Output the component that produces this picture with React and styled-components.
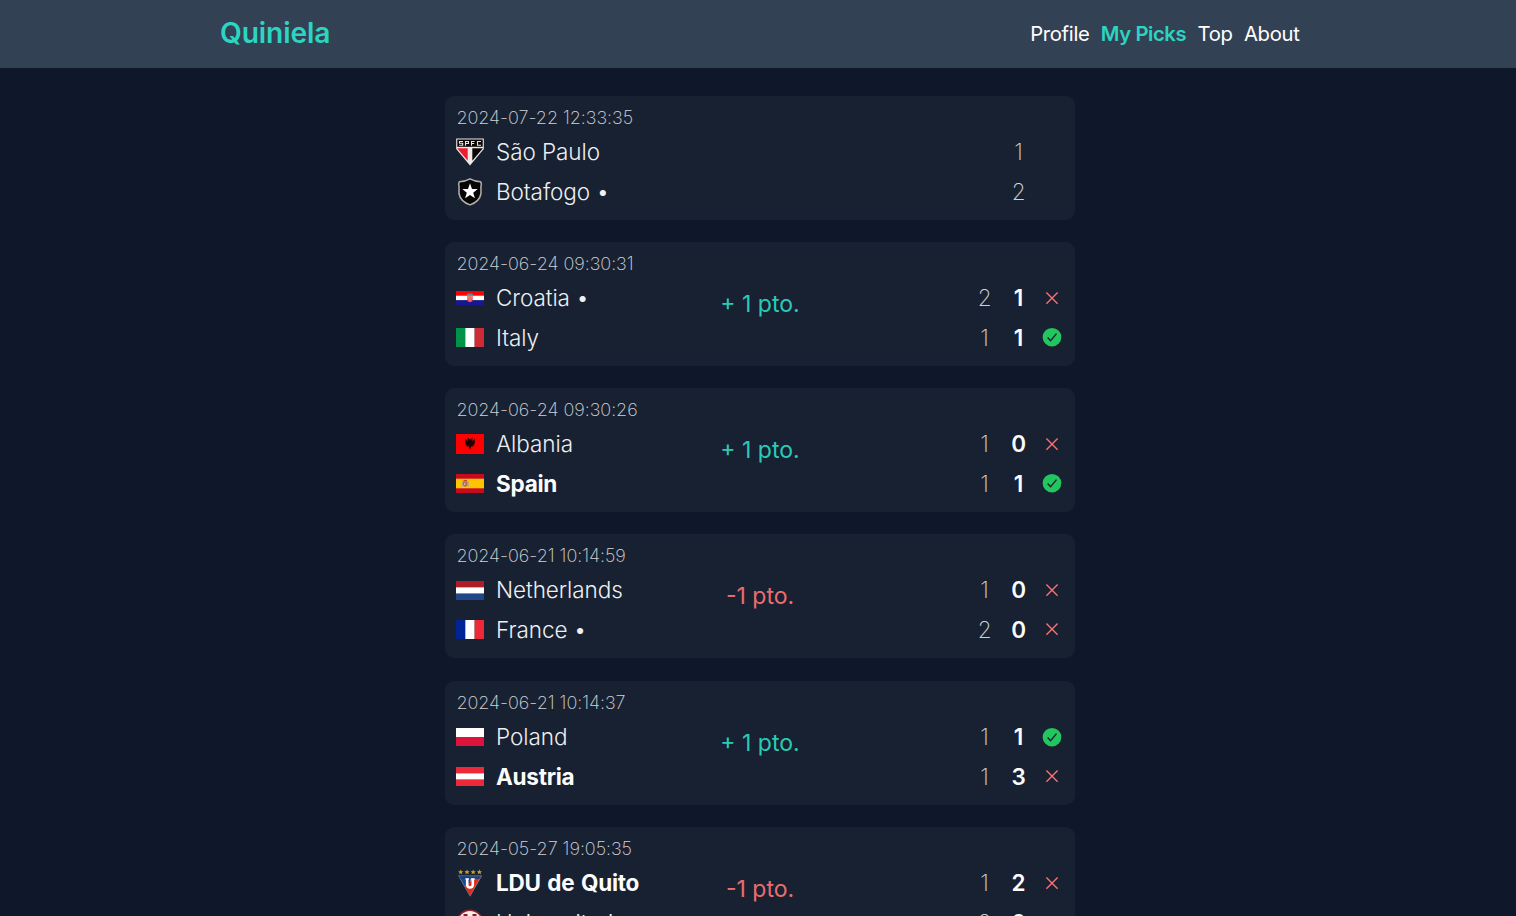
import React from "react";
import styled, { createGlobalStyle } from "styled-components";

const GlobalStyle = createGlobalStyle`
  * { box-sizing: border-box; }
  html, body { margin: 0; height: 100%; overflow: hidden; }
  body {
    background: #0f172a;
    color: #fff;
    font-family: Inter, "Liberation Sans", sans-serif;
  }
`;

const Page = styled.div`
  height: 916px;
  overflow: hidden;
`;

const Header = styled.header`
  height: 68px;
  padding-left: 4px;
  background: #334155;
`;

const HeaderInner = styled.div`
  width: 1080px;
  height: 100%;
  margin: 0 auto;
  padding-right: 0.5px;
  display: flex;
  align-items: center;
  justify-content: space-between;
`;

const Brand = styled.a`
  color: #2dd4bf;
  font-size: 28.2px;
  font-weight: 600;
  line-height: 36px;
  margin-bottom: 2px;
  letter-spacing: -0.12px;
`;

const Nav = styled.nav`
  display: flex;
  gap: 11.25px;
  font-size: 20.25px;
  line-height: 32px;
`;

const NavLink = styled.a`
  color: ${(p) => (p.$active ? "#2dd4bf" : "#fff")};
  font-weight: ${(p) => (p.$active ? 600 : 400)};
  letter-spacing: ${(p) => (p.$active ? "-0.4px" : "-0.3px")};
`;

const List = styled.main`
  padding: 28px 0 0 4px;
  display: flex;
  flex-direction: column;
  align-items: center;
  gap: 22px;
`;

const Card = styled.article`
  width: 630px;
  height: 124px;
  flex: none;
  padding: 9px 11px 0;
  border-radius: 9px;
  background: #172132;

  &:nth-child(5) {
    margin-top: 1px;
  }
`;

const Stamp = styled.div`
  height: 27px;
  padding-left: 0.4px;
  font-size: 18px;
  line-height: 26px;
  font-weight: 200;
  letter-spacing: -0.04px;
  opacity: 0.8;
`;

const Body = styled.div`
  display: grid;
  grid-template-columns: 1fr auto 1fr;
`;

const Teams = styled.div`
  display: flex;
  flex-direction: column;
`;

const Team = styled.div`
  height: 40px;
  display: flex;
  align-items: center;
  gap: 12px;
  font-size: 22.5px;
  font-weight: ${(p) => (p.$bold ? 700 : 300)};
  white-space: nowrap;
`;

const TeamName = styled.span`
  margin-bottom: 1.5px;
  letter-spacing: ${(p) => (p.$bold ? "-0.25px" : "-0.06px")};
  word-spacing: ${(p) => (p.$bold ? "1.5px" : "0")};
  opacity: ${(p) => (p.$bold ? 0.99 : 0.93)};
`;

const Points = styled.div`
  height: 52px;
  display: flex;
  align-items: center;
  font-size: 23px;
  font-weight: 400;
  opacity: 0.95;
  color: ${(p) => (p.$gain ? "#2dd4bf" : "#f87171")};
`;

const Scores = styled.div`
  display: flex;
  flex-direction: column;
`;

const ScoreRow = styled.div`
  height: 40px;
  display: grid;
  grid-template-columns: 34px 34px 33px;
  justify-content: end;
  align-items: center;
  justify-items: center;
  margin-right: -4.6px;
  font-size: 22.5px;

  &:last-child > svg {
    margin-bottom: 2px;
  }
`;

const Pick = styled.span`
  margin-bottom: 1.5px;
  font-weight: 200;
  opacity: 0.8;
`;

const Result = styled.span`
  margin-bottom: 1.5px;
  font-weight: 600;
  opacity: 0.99;
`;

const Icon = styled.svg`
  display: block;
  flex: none;
`;

const Flag = styled(Icon)`
  margin-top: ${(p) => (p.$low ? "1px" : "0")};
  margin-bottom: ${(p) => (p.$high ? "1px" : "0")};
`;

function Stripes({ h, colors, vertical, low, children }) {
  const n = colors.length;
  return (
    <Flag $low={low} $high={!low && h % 2 === 1} width="28" height={h} viewBox={`0 0 28 ${h}`}>
      {colors.map((c, i) =>
        vertical ? (
          <rect key={i} x={(28 / n) * i} width={28 / n} height={h} fill={c} />
        ) : (
          <rect key={i} y={(h / n) * i} width="28" height={h / n} fill={c} />
        )
      )}
      {children}
    </Flag>
  );
}

const crests = {
  saopaulo: (
    <Icon width="28" height="28" viewBox="0 0 28 28">
      <path d="M.2 .5H27.8V11L14 27.5.2 11Z" fill="#f1e9e6" />
      <path d="M1.3 1.5H26.7V8.8H1.3Z" fill="#0b0708" />
      <path d="M1.5 10.3H11.7V22.8L1.5 10.8Z" fill="#ed1c2e" />
      <path d="M16.3 10.3H26.5V10.8L16.3 22.8Z" fill="#0b0708" />
      <path
        d="M7 3.5H3.5V5.3H6.7V7.2H3.2M9.5 7.8V3.5H12.5V5.5H9.5M15.5 7.8V3.5H18.6M15.5 5.5H18.2M25 3.5H21.5V7.2H25"
        fill="none"
        stroke="#e8e2e0"
        strokeWidth="1.1"
      />
    </Icon>
  ),
  botafogo: (
    <Icon width="28" height="28" viewBox="0 0 28 28">
      <path
        d="M14 .9Q19 3.7 24.6 3.7L25.4 6C24.2 9 25.4 12 24.9 16Q23.6 23.4 14 26.9 4.4 23.4 3.1 16C2.6 12 3.8 9 2.6 6L3.4 3.7Q9 3.7 14 .9Z"
        fill="#050505"
        stroke="#b5aeab"
        strokeWidth="1.5"
      />
      <path d="M14 5.2 16 10.9 21.7 11 17.2 14.7 18.9 20.2 14 16.9 9.1 20.2 10.8 14.7 6.3 11 12 10.9Z" fill="#fff" />
    </Icon>
  ),
  croatia: (
    <Stripes h={14} colors={["#ff0000", "#ffffff", "#171796"]}>
      <path d="M11.2 4H16.8V8.5Q16.5 11 14 11.2 11.5 11 11.2 8.5Z" fill="#f45b5b" />
      <path d="M12.3 5.3h1.1v1.1h-1.1zM14.6 5.3h1.1v1.1h-1.1zM13.4 7.4h1.1v1.1h-1.1z" fill="#fbaaaa" />
      <path d="M11 4V2.5L12 3.1 13 1.9 14 2.7 15 1.9 16 3.1 17 2.5V4Z" fill="#687f96" />
    </Stripes>
  ),
  italy: <Stripes h={19} vertical colors={["#009246", "#ffffff", "#ce2b37"]} />,
  albania: (
    <Icon width="28" height="20" viewBox="0 0 28 20">
      <path d="M0 0H28V20H0Z" fill="#ff0000" />
      <path
        d="M14 5.6 12.6 4.2 10.8 4.4 11.9 5.5 11.6 7 9 4.8 9.3 7.5 9 9 10 9.9 9.3 11.5 11.4 10.7 10.3 12.7 12.4 12 13.2 13.7 14 16 14.8 13.7 15.6 12 17.7 12.7 16.6 10.7 18.7 11.5 18 9.9 19 9 18.7 7.5 19 4.8 16.4 7 16.1 5.5 17.2 4.4 15.4 4.2Z"
        fill="#1c0000"
      />
    </Icon>
  ),
  spain: (
    <Flag $high width="28" height="19" viewBox="0 0 28 19">
      <path d="M0 0H28V19H0Z" fill="#c60b1e" />
      <path d="M0 4.7H28V14.3H0Z" fill="#ffc400" />
      <path d="M7 7.5H11.5V11.5L9.3 13 7 11.5Z" fill="#b96b52" />
      <path d="M6.3 7.3V12.8M12.3 7.3V12.8" stroke="#aca093" strokeWidth="1" />
      <path d="M7.4 7.2V6.2L9.3 5.7 11.2 6.2V7.2Z" fill="#b5522a" />
      <path d="M8 9.3h1.3v1.5H8z" fill="#e6c9b5" />
    </Flag>
  ),
  netherlands: <Stripes h={19} low colors={["#ae1c28", "#ffffff", "#21468b"]} />,
  france: <Stripes h={19} vertical colors={["#002395", "#ffffff", "#ed2939"]} />,
  poland: (
    <Flag $low width="28" height="19" viewBox="0 0 28 19">
      <path d="M0 0H28V9H0Z" fill="#ffffff" />
      <path d="M0 9H28V18H0Z" fill="#dc143c" />
    </Flag>
  ),
  austria: <Stripes h={19} colors={["#ed2939", "#ffffff", "#ed2939"]} />,
  ldu: (
    <Icon width="28" height="28" viewBox="0 0 28 28">
      {[4.7, 11, 17.2, 23.4].map((x) => (
        <path
          key={x}
          transform={`translate(${x} 3)`}
          d="M0-2.6 .8-.8 2.6-.7 1.2 .5 1.7 2.3 0 1.3-1.7 2.3-1.2 .5-2.6-.7-.8-.8Z"
          fill="#c9a523"
        />
      ))}
      <path d="M2 6.5H26.2L14.1 27.8Z" fill="#8a827c" />
      <path d="M3.2 7.3H14V26.2Z" fill="#124a9c" />
      <path d="M24.8 7.3 14.1 26.4 8.2 16.2Z" fill="#e02b20" />
      <path d="M3.2 7.3H25L23.5 9.8H4.6Z" fill="#173e86" />
      <path d="M9.3 9.2H13V10.5H12.5V16.3Q14 18 15.5 16.3V10.5H15V9.2H18.7V10.5H18.1V16.6Q17.4 19.8 14 19.8 10.6 19.8 9.9 16.6V10.5H9.3Z" fill="#fff" />
    </Icon>
  ),
  universitario: (
    <Icon width="28" height="28" viewBox="0 0 28 28">
      <circle cx="14" cy="14" r="12.8" fill="#f7eedf" stroke="#8d2731" strokeWidth="1.6" />
      <path d="M7.5 5H11.5V16Q14 19 16.5 16V5H20.5V17Q20.5 23 14 23T7.5 17Z" fill="#8d1b2c" />
    </Icon>
  ),
};

function Mark({ ok }) {
  return ok ? (
    <Icon width="20" height="20" viewBox="0 0 20 20">
      <circle cx="10" cy="10.2" r="9.3" fill="#22c55e" />
      <path d="M5.6 10.5 8.6 13.7 14.5 6.6" fill="none" stroke="#172132" strokeWidth="1.4" />
    </Icon>
  ) : (
    <Icon width="20" height="20" viewBox="0 0 20 20">
      <path d="M4.4 4.6 15.6 15.8M15.6 4.6 4.4 15.8" stroke="#f87171" strokeWidth="1.4" />
    </Icon>
  );
}

const matches = [
  {
    time: "2024-07-22 12:33:35",
    rows: [
      { crest: "saopaulo", name: "São Paulo", result: null, pick: 1 },
      { crest: "botafogo", name: "Botafogo", dot: true, result: null, pick: 2 },
    ],
  },
  {
    time: "2024-06-24 09:30:31",
    points: 1,
    rows: [
      { crest: "croatia", name: "Croatia", dot: true, pick: 2, result: 1, ok: false },
      { crest: "italy", name: "Italy", pick: 1, result: 1, ok: true },
    ],
  },
  {
    time: "2024-06-24 09:30:26",
    points: 1,
    rows: [
      { crest: "albania", name: "Albania", pick: 1, result: 0, ok: false },
      { crest: "spain", name: "Spain", bold: true, pick: 1, result: 1, ok: true },
    ],
  },
  {
    time: "2024-06-21 10:14:59",
    points: -1,
    rows: [
      { crest: "netherlands", name: "Netherlands", pick: 1, result: 0, ok: false },
      { crest: "france", name: "France", dot: true, pick: 2, result: 0, ok: false },
    ],
  },
  {
    time: "2024-06-21 10:14:37",
    points: 1,
    rows: [
      { crest: "poland", name: "Poland", pick: 1, result: 1, ok: true },
      { crest: "austria", name: "Austria", bold: true, pick: 1, result: 3, ok: false },
    ],
  },
  {
    time: "2024-05-27 19:05:35",
    points: -1,
    rows: [
      { crest: "ldu", name: "LDU de Quito", bold: true, pick: 1, result: 2, ok: false },
      { crest: "universitario", name: "Universitario", pick: 2, result: 0, ok: false },
    ],
  },
];

function MatchCard({ match }) {
  return (
    <Card>
      <Stamp>{match.time}</Stamp>
      <Body>
        <Teams>
          {match.rows.map((r) => (
            <Team key={r.name} $bold={r.bold}>
              {crests[r.crest]}
              <TeamName $bold={r.bold}>{r.dot ? `${r.name} •` : r.name}</TeamName>
            </Team>
          ))}
        </Teams>
        <Points $gain={match.points > 0}>
          {match.points ? (match.points > 0 ? "+ 1 pto." : "-1 pto.") : ""}
        </Points>
        <Scores>
          {match.rows.map((r) => (
            <ScoreRow key={r.name}>
              {r.result === null ? (
                <>
                  <span />
                  <Pick>{r.pick}</Pick>
                </>
              ) : (
                <>
                  <Pick>{r.pick}</Pick>
                  <Result>{r.result}</Result>
                  <Mark ok={r.ok} />
                </>
              )}
            </ScoreRow>
          ))}
        </Scores>
      </Body>
    </Card>
  );
}

export default function App() {
  return (
    <Page>
      <GlobalStyle />
      <Header>
        <HeaderInner>
          <Brand>Quiniela</Brand>
          <Nav>
            <NavLink>Profile</NavLink>
            <NavLink $active>My Picks</NavLink>
            <NavLink>Top</NavLink>
            <NavLink>About</NavLink>
          </Nav>
        </HeaderInner>
      </Header>
      <List>
        {matches.map((m) => (
          <MatchCard key={m.time} match={m} />
        ))}
      </List>
    </Page>
  );
}
